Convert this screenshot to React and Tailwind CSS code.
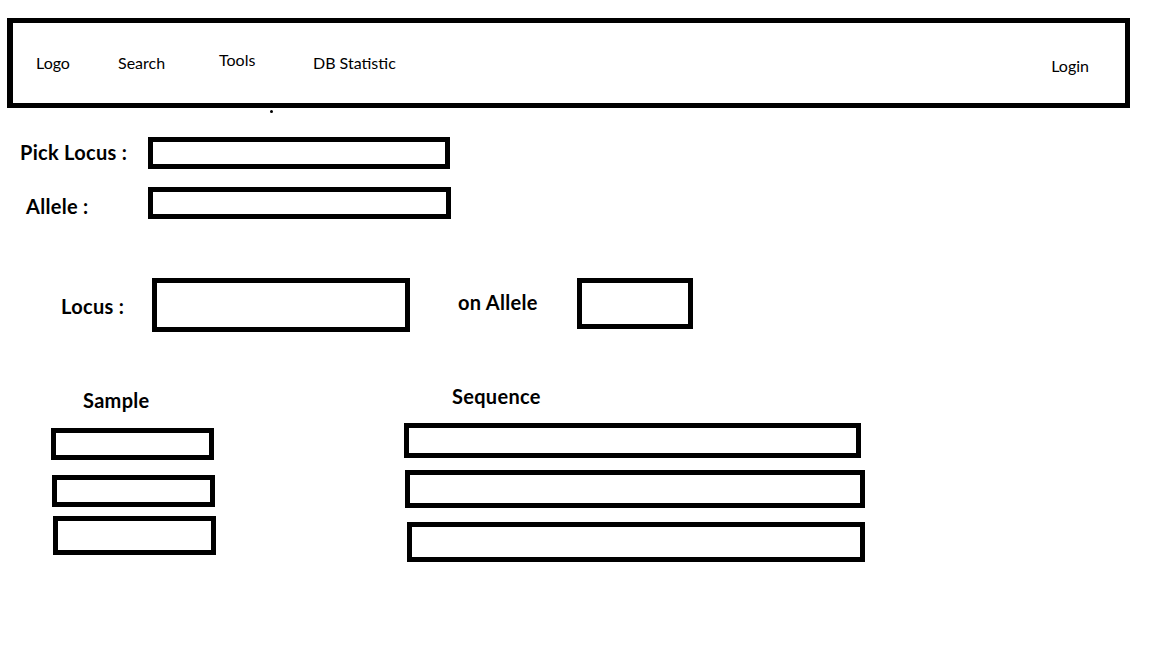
export default function App() {
  const nav = "font-['Lato','Open_Sans',sans-serif] text-[16px] text-black"
  const label = "font-['Lato','Open_Sans',sans-serif] font-bold text-[20px] leading-[28px] tracking-[0.3px] text-black"
  const box = "block border-[5px] border-black bg-white outline-none"

  return (
    <div className="min-h-screen w-[1152px] bg-white">
      {/* Top bar */}
      <nav className="ml-[7px] mt-[18px] flex h-[90px] w-[1123px] items-center border-[5px] border-l-[6px] border-black pl-[23px] pr-[36px]">
        <span className={`${nav} w-[82px]`}>Logo</span>
        <span className={`${nav} w-[101px]`}>Search</span>
        <span className={`${nav} mb-[6px] w-[94px]`}>Tools</span>
        <span className={nav}>DB Statistic</span>
        <span className={`${nav} ml-auto mt-[6px]`}>Login</span>
      </nav>
      <div className="ml-[270px] mt-[2px] h-[3px] w-[3px] rounded-full bg-black" />

      {/* Pick locus / allele */}
      <div className="mt-[24px] flex items-start pl-[20px]">
        <span className={`${label} mt-[1px] w-[128px]`}>Pick Locus :</span>
        <input className={`${box} h-[32px] w-[302px]`} />
      </div>
      <div className="mt-[18px] flex items-start pl-[26px]">
        <span className={`${label} mt-[5px] w-[122px]`}>Allele :</span>
        <input className={`${box} h-[32px] w-[303px]`} />
      </div>

      {/* Locus on allele */}
      <div className="mt-[58px] flex items-start pl-[61px]">
        <span className={`${label} mt-[14px] w-[91px]`}>Locus :</span>
        <input className={`${box} h-[54px] w-[258px]`} />
        <span className={`${label} ml-[48px] mt-[10px] w-[119px]`}>on Allele</span>
        <input className={`${box} h-[51px] w-[116px]`} />
      </div>

      {/* Sample / sequence */}
      <div className="mt-[50px] flex items-start">
        <div className="ml-[51px] w-[353px] pt-[4px]">
          <div className={`${label} ml-[32px]`}>Sample</div>
          <input className={`${box} mt-[14px] h-[32px] w-[163px]`} />
          <input className={`${box} ml-[1px] mt-[15px] h-[32px] w-[163px]`} />
          <input className={`${box} ml-[2px] mt-[9px] h-[39px] w-[163px]`} />
        </div>
        <div>
          <div className={`${label} ml-[48px]`}>Sequence</div>
          <input className={`${box} mt-[13px] h-[35px] w-[457px]`} />
          <input className={`${box} ml-[1px] mt-[12px] h-[38px] w-[460px]`} />
          <input className={`${box} ml-[3px] mt-[14px] h-[40px] w-[458px]`} />
        </div>
      </div>
    </div>
  )
}
